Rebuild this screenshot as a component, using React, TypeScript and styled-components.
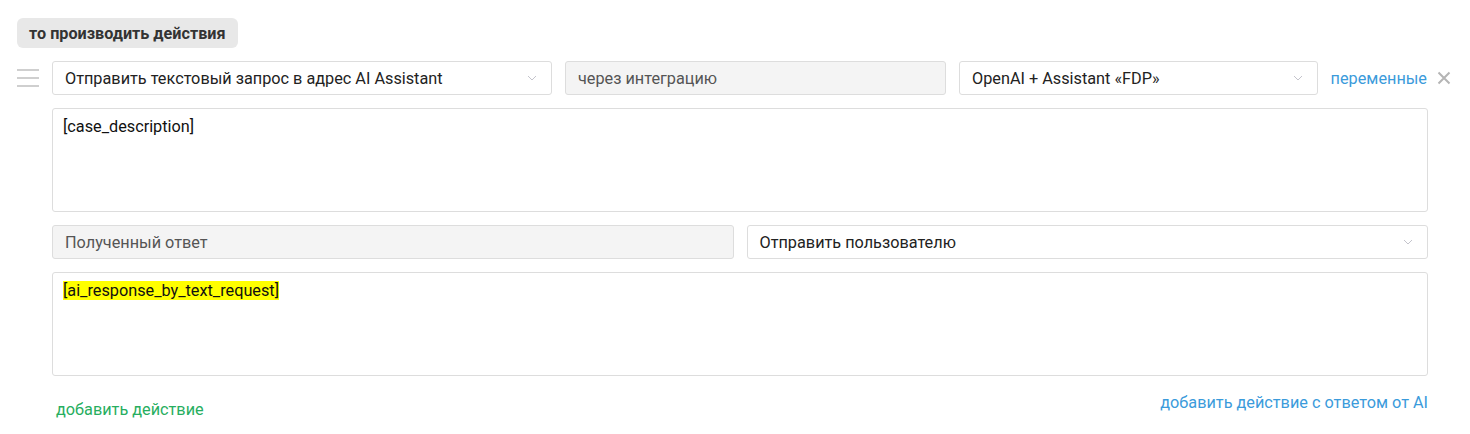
import React from "react";
import styled, { createGlobalStyle } from "styled-components";

const GlobalStyle = createGlobalStyle`
  html, body {
    margin: 0;
    padding: 0;
    background: #ffffff;
    font-family: Roboto, "Noto Sans", Arial, sans-serif;
  }
  * { box-sizing: border-box; }
`;

const Page = styled.div`
  width: 1470px;
  padding: 18px 42px 0 17px;
`;

const Badge = styled.div`
  display: inline-flex;
  align-items: center;
  height: 30px;
  padding: 0 12px;
  background: #e8e8e8;
  border-radius: 6px;
  font-size: 16.2px;
  font-weight: 700;
  color: #333333;
`;

const Block = styled.div`
  display: flex;
  gap: 13px;
  margin-top: 13px;
`;

const Handle = styled.div`
  width: 22px;
  padding-top: 8px;
  display: flex;
  flex-direction: column;
  gap: 6px;
  flex-shrink: 0;

  span {
    display: block;
    height: 2px;
    background: #cfcfcf;
  }
`;

const Body = styled.div`
  flex: 1;
  display: flex;
  flex-direction: column;
  gap: 13px;
`;

const Row = styled.div`
  display: flex;
  align-items: center;
  gap: 13px;
`;

const Field = styled.div<{ $width?: number; $disabled?: boolean }>`
  ${({ $width }) => ($width ? `width: ${$width}px; flex-shrink: 0;` : "flex: 1;")}
  height: 34px;
  display: flex;
  align-items: center;
  justify-content: space-between;
  padding: 0 12px 0 12px;
  border: 1px solid #dddddd;
  border-radius: 3px;
  background: ${({ $disabled }) => ($disabled ? "#f4f4f4" : "#ffffff")};
  color: ${({ $disabled }) => ($disabled ? "#555555" : "#222222")};
  font-size: 16.25px;
  white-space: nowrap;
`;

const Chevron = () => (
  <svg width="10" height="6" viewBox="0 0 10 6" style={{ marginRight: 2 }}>
    <path d="M1 1l4 4 4-4" fill="none" stroke="#c4c4cc" strokeWidth="1" />
  </svg>
);

const Link = styled.span<{ $color: string }>`
  color: ${({ $color }) => $color};
  font-size: 16.25px;
  cursor: pointer;
  white-space: nowrap;
`;

const Tools = styled.div`
  display: flex;
  align-items: center;
  gap: 10px;
  margin-right: -23px;
`;

const Close = () => (
  <svg width="14" height="14" viewBox="0 0 14 14">
    <path d="M1.5 1.5l11 11M12.5 1.5l-11 11" stroke="#b5b5b5" strokeWidth="2" />
  </svg>
);

const TextBox = styled.div`
  height: 104px;
  border: 1px solid #dddddd;
  border-radius: 3px;
  padding: 8px 10px;
  font-size: 16.25px;
  color: #111111;
`;

const Mark = styled.span`
  background: #ffff00;
`;

const Footer = styled.div`
  display: flex;
  justify-content: space-between;
  align-items: flex-start;
  padding: 17px 0 0 39px;
`;

const GreenLink = styled(Link)`
  margin-top: 7px;
`;

export default function App() {
  return (
    <Page>
      <GlobalStyle />
      <Badge>то производить действия</Badge>
      <Block>
        <Handle>
          <span />
          <span />
          <span />
        </Handle>
        <Body>
          <Row>
            <Field $width={500}>
              Отправить текстовый запрос в адрес AI Assistant
              <Chevron />
            </Field>
            <Field $width={381} $disabled>
              через интеграцию
            </Field>
            <Field>
              OpenAI + Assistant «FDP»
              <Chevron />
            </Field>
            <Tools>
              <Link $color="#3b9bdb">переменные</Link>
              <Close />
            </Tools>
          </Row>
          <TextBox>[case_description]</TextBox>
          <Row>
            <Field $disabled>Полученный ответ</Field>
            <Field>
              Отправить пользователю
              <Chevron />
            </Field>
          </Row>
          <TextBox>
            <Mark>[ai_response_by_text_request]</Mark>
          </TextBox>
        </Body>
      </Block>
      <Footer>
        <GreenLink $color="#27ae60">добавить действие</GreenLink>
        <Link $color="#3b9bdb">добавить действие с ответом от AI</Link>
      </Footer>
    </Page>
  );
}
